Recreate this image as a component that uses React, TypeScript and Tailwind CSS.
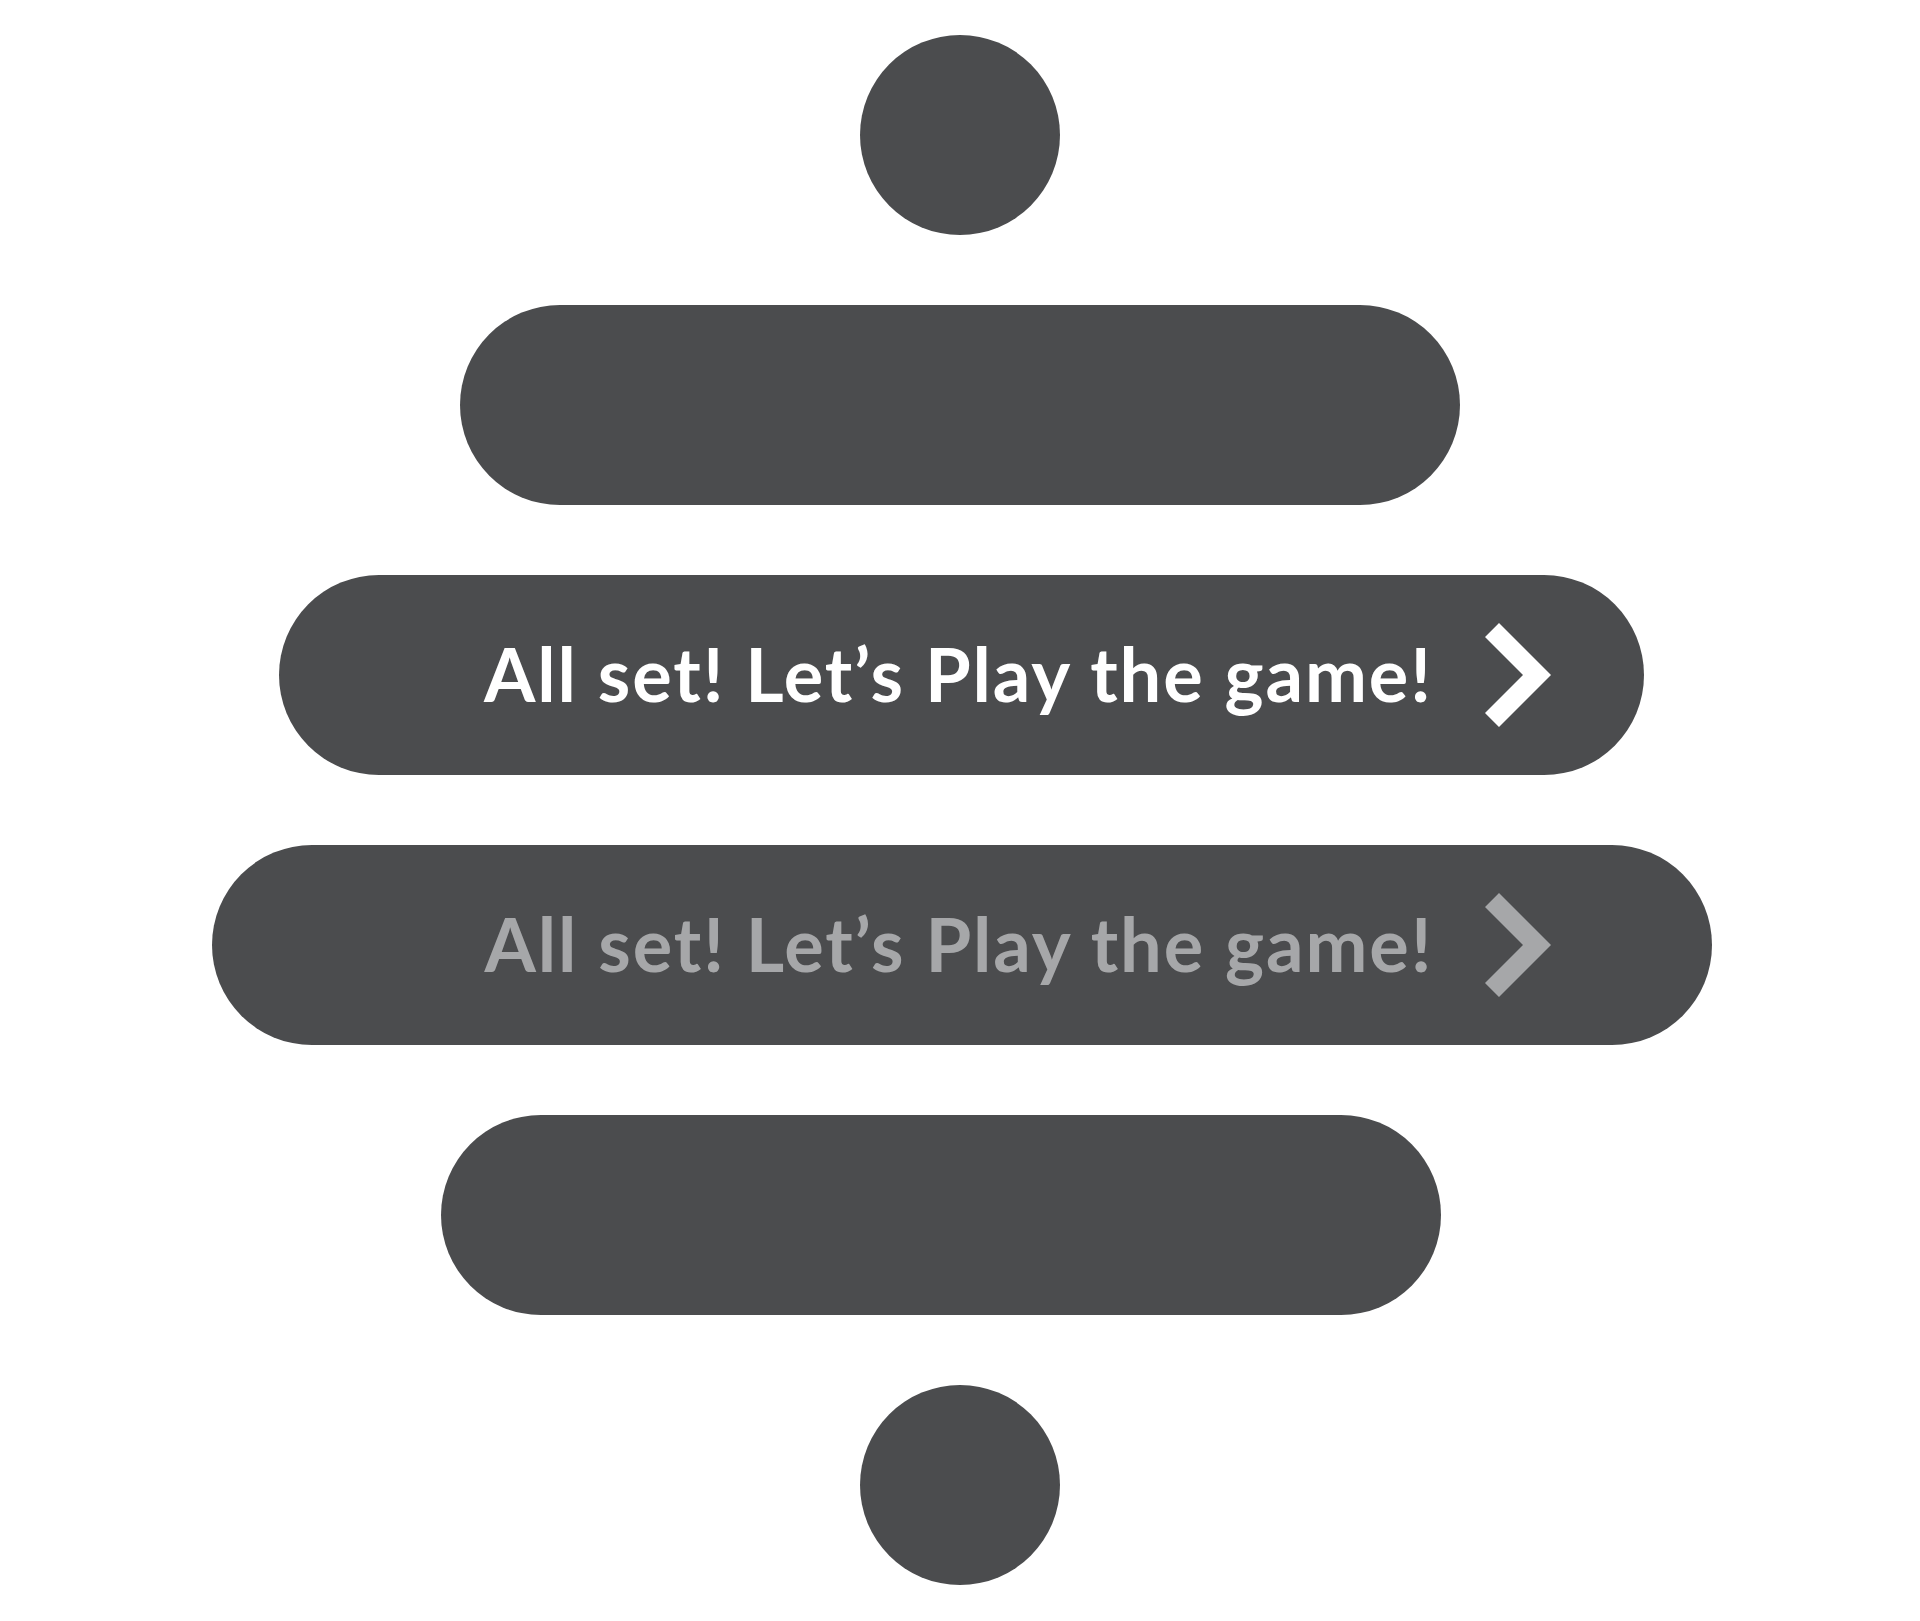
export default function App() {
  const label = "All set! Let\u2019s Play the game!";

  const Chevron = ({ color }: { color: string }) => (
    <svg width="66" height="104" viewBox="0 0 66 104" className="shrink-0">
      <polygon points="0,14 14,0 66,52 14,104 0,90 38,52" fill={color} />
    </svg>
  );

  return (
    <div className="flex h-[1621px] w-full flex-col items-center gap-[70px] bg-white pt-[35px]">
      {/* top dot */}
      <div className="h-[200px] w-[200px] rounded-full bg-[#4b4c4e]" />

      {/* empty pill */}
      <div className="h-[200px] w-[1000px] rounded-full bg-[#4b4c4e]" />

      {/* active button */}
      <div className="ml-[3px] flex h-[200px] w-[1365px] items-center justify-center rounded-full bg-[#4b4c4e] pl-[112px]">
        <span className="-mt-[3px] font-['Lato','Liberation_Sans',sans-serif] text-[74px] font-bold leading-none tracking-[1.9px] text-white">
          {label}
        </span>
        <div className="ml-[52px]">
          <Chevron color="#ffffff" />
        </div>
      </div>

      {/* disabled button */}
      <div className="ml-[4px] flex h-[200px] w-[1500px] items-center justify-center rounded-full bg-[#4b4c4e] pl-[112px]">
        <span className="-mt-[3px] font-['Lato','Liberation_Sans',sans-serif] text-[74px] font-bold leading-none tracking-[1.9px] text-[#a6a7a9]">
          {label}
        </span>
        <div className="ml-[52px]">
          <Chevron color="#a6a7a9" />
        </div>
      </div>

      {/* empty pill */}
      <div className="mr-[38px] h-[200px] w-[1000px] rounded-full bg-[#4b4c4e]" />

      {/* bottom dot */}
      <div className="h-[200px] w-[200px] rounded-full bg-[#4b4c4e]" />
    </div>
  );
}
